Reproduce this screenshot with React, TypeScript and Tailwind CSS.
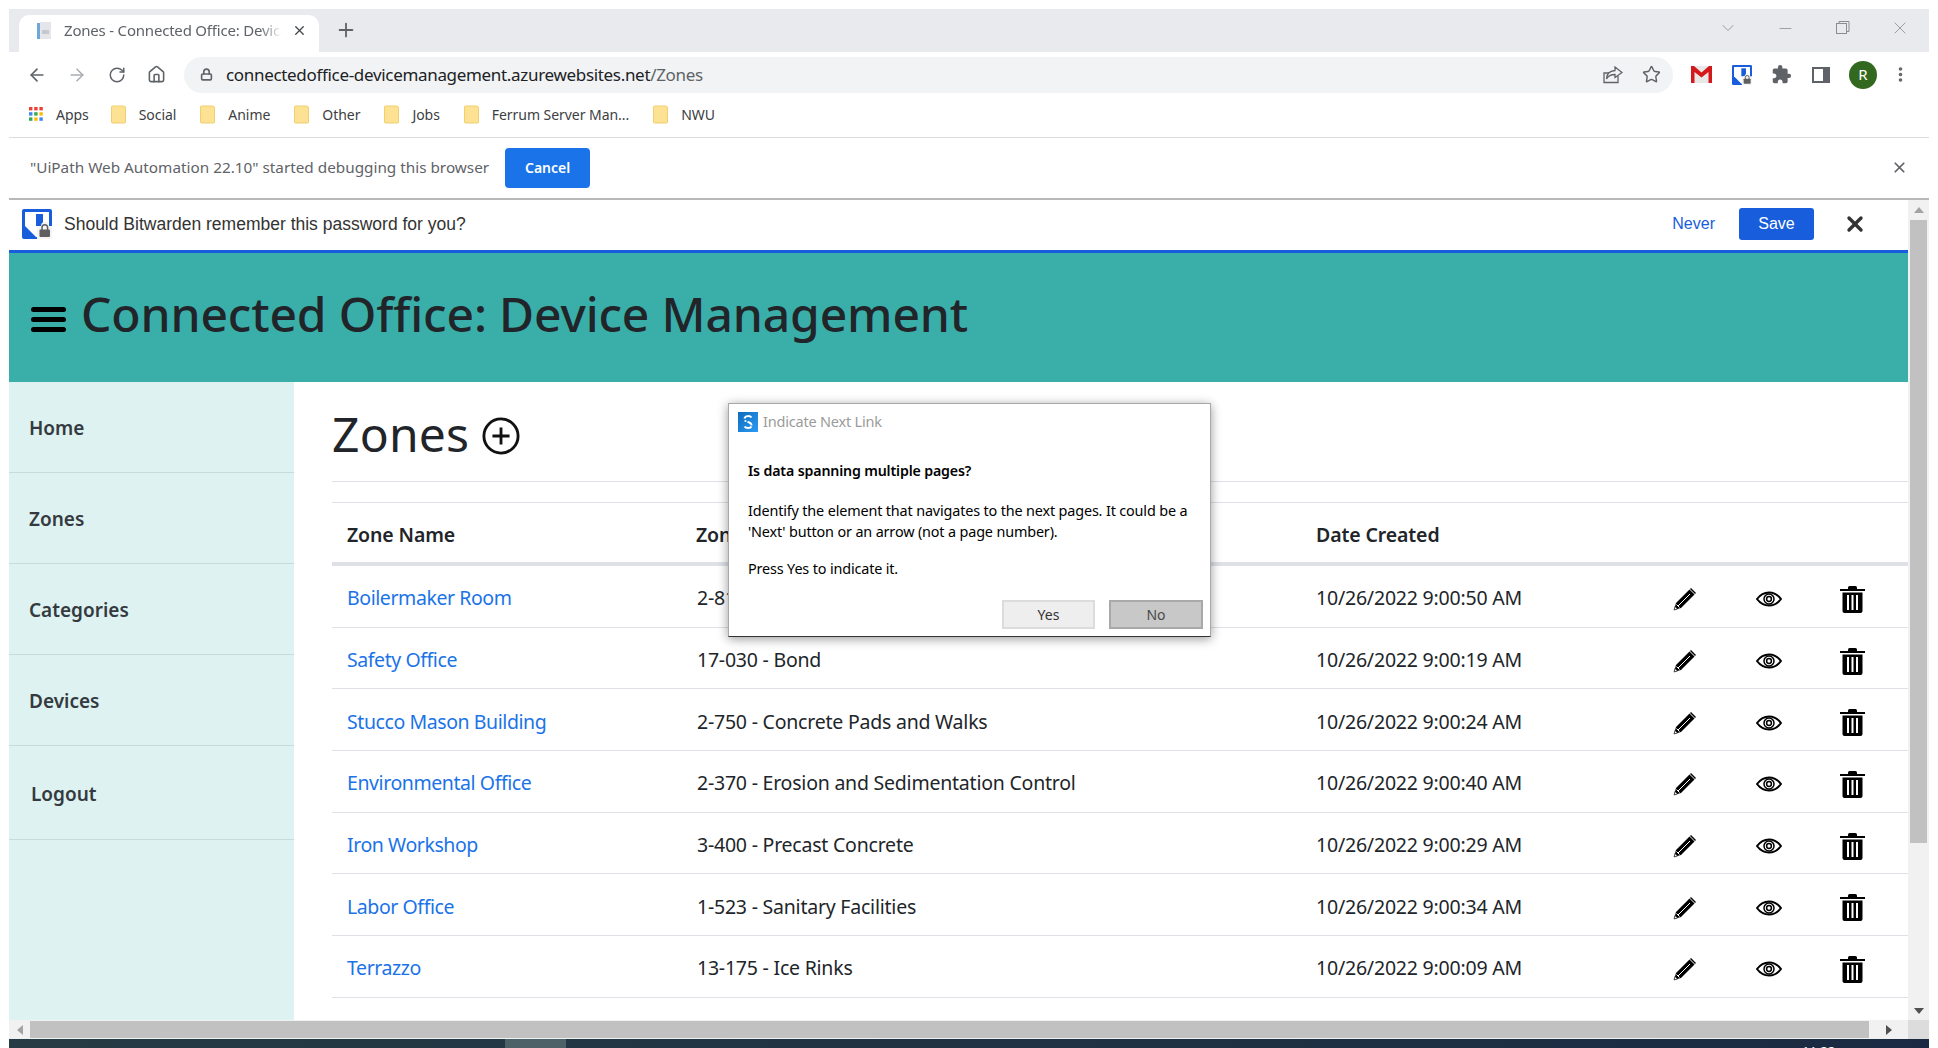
import { ArrowLeft, ArrowRight, RotateCw, Home, Lock, Star, Plus, X, ChevronDown, Minus, MoreVertical } from "lucide-react";
import { MdExtension } from "react-icons/md";

const zones = [
  { name: "Boilermaker Room", zone: "2-810 - Asphalt Paving", date: "10/26/2022 9:00:50 AM" },
  { name: "Safety Office", zone: "17-030 - Bond", date: "10/26/2022 9:00:19 AM" },
  { name: "Stucco Mason Building", zone: "2-750 - Concrete Pads and Walks", date: "10/26/2022 9:00:24 AM" },
  { name: "Environmental Office", zone: "2-370 - Erosion and Sedimentation Control", date: "10/26/2022 9:00:40 AM" },
  { name: "Iron Workshop", zone: "3-400 - Precast Concrete", date: "10/26/2022 9:00:29 AM" },
  { name: "Labor Office", zone: "1-523 - Sanitary Facilities", date: "10/26/2022 9:00:34 AM" },
  { name: "Terrazzo", zone: "13-175 - Ice Rinks", date: "10/26/2022 9:00:09 AM" },
];

const bookmarks = ["Social", "Anime", "Other", "Jobs", "Ferrum Server Man...", "NWU"];
const navItems = ["Home", "Zones", "Categories", "Devices"];

function FolderIcon() {
  return (
    <svg width="16" height="19" viewBox="0 0 16 19">
      <path d="M1.5 1h11a2 2 0 0 1 2 2v14a1 1 0 0 1-1 1h-12a1 1 0 0 1-1-1V2a1 1 0 0 1 1-1z" fill="#fde293" stroke="#f0cf70" />
    </svg>
  );
}

function AppsIcon() {
  const colors = ["#ea4335", "#ea4335", "#ea4335", "#4285f4", "#34a853", "#fbbc04", "#34a853", "#fbbc04", "#4285f4"];
  return (
    <svg width="16" height="16" viewBox="0 0 16 16">
      {colors.map((c, i) => (
        <rect key={i} x={1 + (i % 3) * 5.2} y={1 + Math.floor(i / 3) * 5.2} width="3.4" height="3.4" fill={c} />
      ))}
    </svg>
  );
}

function BitwardenIcon({ size }: { size: number }) {
  return (
    <svg width={size} height={size} viewBox="0 0 30 30">
      <rect x="0" y="0" width="30" height="30" rx="2" fill="#175ddc" />
      <path d="M3 3H27V28H14L3 17Z" fill="#fff" />
      <rect x="14" y="5" width="7" height="12" fill="#175ddc" />
      <path d="M15 30V20a3 3 0 0 1 3-3h1a4 4 0 0 1 8 0h3v13z" fill="#f4f4f4" />
      <rect x="17.500" y="20.500" width="10.500" height="7.500" rx="1" fill="#5f5f5f" />
      <path d="M20 21v-2.500a2.800 2.800 0 0 1 5.600 0V21" fill="none" stroke="#5f5f5f" strokeWidth="1.500" />
    </svg>
  );
}

function GmailIcon() {
  return (
    <svg width="21" height="17" viewBox="0 0 21 17">
      <rect width="21" height="17" fill="#e8e8e8" />
      <path d="M0 0h3l7.500 6.500L18 0h3v17h-3.500V6l-7 5.500L3.500 6v11H0z" fill="#d5181c" />
    </svg>
  );
}

function PencilIcon() {
  return (
    <svg width="24" height="24" viewBox="0 0 24 24">
      <path d="M1 23l2-7L16.500 2.500l5 5L8 21z" fill="#000" />
      <path d="M18 1l5 5-1 1-5-5z" fill="#000" />
      <path d="M5 19L17 7" stroke="#fff" strokeWidth="1" />
      <path d="M3.500 17.500l3 3" stroke="#fff" strokeWidth="1" />
      <path d="M1 23l1-3.500 2.500 2.500z" fill="#fff" stroke="#000" strokeWidth="0.6" />
    </svg>
  );
}

function EyeIcon() {
  return (
    <svg width="26" height="16" viewBox="0 0 26 16">
      <path d="M1 8c3-4 7.500-6.500 12-6.500S22 4 25 8c-3 4-7.500 6.500-12 6.500S4 12 1 8z" fill="none" stroke="#000" strokeWidth="2" />
      <circle cx="13" cy="8" r="5" fill="none" stroke="#000" strokeWidth="1.500" />
      <circle cx="13" cy="8" r="2.400" fill="none" stroke="#000" strokeWidth="1.500" />
    </svg>
  );
}

function TrashIcon() {
  return (
    <svg width="25" height="27" viewBox="0 0 25 27">
      <path d="M0 3h25v2H0z" fill="#000" />
      <path d="M8 3V1.500A1.500 1.500 0 0 1 9.500 0h6A1.500 1.500 0 0 1 17 1.500V3z" fill="#000" />
      <path d="M2.500 6.500h20V25a2 2 0 0 1-2 2h-16a2 2 0 0 1-2-2z" fill="#000" />
      <rect x="7" y="9" width="2" height="15" fill="#fff" />
      <rect x="11.500" y="9" width="2" height="15" fill="#fff" />
      <rect x="16" y="9" width="2" height="15" fill="#fff" />
    </svg>
  );
}

function DialogLogo() {
  return (
    <svg width="20" height="20" viewBox="0 0 20 20">
      <defs>
        <linearGradient id="dlg" x1="0" y1="0" x2="1" y2="1">
          <stop offset="0" stopColor="#0f6cbd" />
          <stop offset="1" stopColor="#2b9af3" />
        </linearGradient>
      </defs>
      <rect width="20" height="20" fill="url(#dlg)" />
      <path d="M13.500 5.500C12 3.500 7 3.500 6.500 6.500" fill="none" stroke="#fff" strokeWidth="2" />
      <circle cx="7.500" cy="9" r="1.100" fill="#fff" />
      <path d="M9.500 10c3 0.500 4 1.500 4 3.500" fill="none" stroke="#fff" strokeWidth="2" />
      <path d="M6.500 14.500c1.500 2 6 2 7 0" fill="none" stroke="#fff" strokeWidth="2" />
    </svg>
  );
}

export default function App() {
  return (
    <div className="relative flex h-[1048px] w-[1938px] flex-col overflow-hidden bg-white pt-[9px] pl-[9px] pr-[9px] font-['Noto_Sans',sans-serif] text-[#212529]">
      {/* tab strip */}
      <div className="flex h-[43px] shrink-0 items-end bg-[#e8eaed] pl-[10px]">
        <div className="flex h-[37px] w-[300px] items-center rounded-t-[10px] bg-white pb-[6px] pl-[16px] pr-[10px]">
          <svg width="20" height="20" viewBox="0 0 20 20" className="shrink-0">
            <rect x="2" y="2" width="3" height="16" fill="#6ea8d8" />
            <rect x="5" y="1" width="11" height="17" fill="#e6e6ea" />
            <rect x="7" y="9" width="7" height="4" fill="#c4c8d0" />
          </svg>
          <span className="ml-[9px] w-[218px] overflow-hidden whitespace-nowrap text-[15px] tracking-[-0.2px] text-[#5f6368] [mask-image:linear-gradient(to_right,black_90%,transparent)]">Zones - Connected Office: Device Management</span>
          <X size={15} strokeWidth={2.2} className="ml-[10px] shrink-0 text-[#45494d]" />
        </div>
        <Plus size={22} strokeWidth={2} className="mb-[11px] ml-[16px] text-[#5f6368]" />
        <div className="mb-[14px] ml-auto flex items-center text-[#8a8d91]">
          <ChevronDown size={20} strokeWidth={1} className="mr-[38px]" />
          <Minus size={19} strokeWidth={1} className="mr-[41px]" />
          <svg width="14" height="14" viewBox="0 0 14 14" className="mr-[40px]" fill="none" stroke="currentColor" strokeWidth="1">
            <rect x="0.500" y="2.500" width="10" height="10" />
            <path d="M3 2.500V0.500h10v10h-2" />
          </svg>
          <X size={20} strokeWidth={1} className="mr-[19px]" />
        </div>
      </div>

      {/* toolbar */}
      <div className="flex h-[47px] shrink-0 items-center pb-[2px] pl-[16px]">
        <ArrowLeft size={20} strokeWidth={2} className="ml-[2px] text-[#5f6368]" />
        <ArrowRight size={20} strokeWidth={1.8} className="ml-[20px] text-[#a9adb1]" />
        <RotateCw size={18} strokeWidth={2} className="ml-[21px] text-[#5f6368]" />
        <Home size={19} strokeWidth={2} className="ml-[21px] text-[#5f6368]" />
        <div className="ml-[18px] flex h-[36px] w-[1489px] items-center rounded-[18px] bg-[#f1f3f4] pl-[16px] pr-[12px]">
          <Lock size={13} strokeWidth={3} className="text-[#5f6368]" />
          <span className="ml-[13px] text-[17px] tracking-[-0.32px] text-[#202124]">connectedoffice-devicemanagement.azurewebsites.net<span className="text-[#5f6368]">/Zones</span></span>
          <svg width="20" height="18" viewBox="0 0 20 18" className="ml-auto" fill="none" stroke="#5f6368" strokeWidth="1.300">
            <path d="M15 10v6.500H1V7h5" />
            <path d="M12 1l7 5.500-7 5V8.500C8 8.500 5 10 3.500 13c0-5 3.500-8 8.500-8.500z" />
          </svg>
          <Star size={19} strokeWidth={1.8} className="ml-[19px] text-[#5f6368]" />
        </div>
        <div className="ml-[18px] flex items-center">
          <GmailIcon />
          <span className="ml-[20px] flex"><BitwardenIcon size={20} /></span>
          <MdExtension size={21} className="ml-[19px] text-[#5f6368]" />
          <svg width="18" height="16" viewBox="0 0 18 16" className="ml-[20px]">
            <rect width="18" height="16" fill="#5f6368" />
            <rect x="2" y="2" width="9" height="12" fill="#fff" />
          </svg>
          <div className="ml-[19px] flex h-[28px] w-[28px] items-center justify-center rounded-full bg-[#33691e] text-[15px] text-white">R</div>
          <MoreVertical size={19} strokeWidth={2.6} className="ml-[14px] text-[#5f6368]" />
        </div>
      </div>

      {/* bookmarks */}
      <div className="flex h-[39px] shrink-0 items-center border-b border-[#dadce0] pb-[8px] pl-[19px] text-[14px] tracking-[-0.05px] text-[#3c4043]">
        <AppsIcon />
        <span className="ml-[12px] mr-[22px]">Apps</span>
        {bookmarks.map((b) => (
          <span key={b} className="mr-[24px] flex items-center">
            <FolderIcon />
            <span className="ml-[12px]">{b}</span>
          </span>
        ))}
      </div>

      {/* debugging bar */}
      <div className="flex h-[62px] shrink-0 items-center border-b-2 border-[#b8b8b8] pb-[1px] pl-[21px] pr-[21px] text-[15.300px] text-[#5f6368]">
        <span>"UiPath Web Automation 22.10" started debugging this browser</span>
        <span className="ml-[16px] flex h-[40px] w-[85px] items-center justify-center rounded-[4px] bg-[#1a73e8] text-[14px] font-semibold text-white">Cancel</span>
        <X size={17} strokeWidth={2.4} className="ml-auto text-[#5f6368]" />
      </div>

      {/* page viewport */}
      <div className="flex min-h-0 flex-1 flex-col">
        <div className="flex min-h-0 flex-1">
          <div className="flex min-w-0 flex-1 flex-col">
            <div className="flex h-[50px] shrink-0 items-center pb-[2px] pl-[13px] pr-[41px] font-['Liberation_Sans',sans-serif]">
              <BitwardenIcon size={30} />
              <span className="ml-[12px] text-[17.500px] text-[#333]">Should Bitwarden remember this password for you?</span>
              <span className="ml-auto text-[16px] text-[#175ddc]">Never</span>
              <span className="ml-[24px] flex h-[32px] w-[75px] items-center justify-center rounded-[3px] bg-[#175ddc] text-[16px] text-white">Save</span>
              <X size={24} strokeWidth={3.4} className="ml-[29px] text-[#333]" />
            </div>
            <div className="flex h-[132px] shrink-0 items-center border-t-[3px] border-[#175ddc] bg-[#3aafa9] pb-[8px] pl-[22px]">
              <div className="mt-[12px] flex w-[35px] flex-col gap-[5px]">
                <span className="h-[5px] rounded-full bg-black" />
                <span className="h-[5px] rounded-full bg-black" />
                <span className="h-[5px] rounded-full bg-black" />
              </div>
              <h1 className="ml-[15px] text-[48px] font-medium tracking-[-0.15px] text-[#212529]">Connected Office: Device Management</h1>
            </div>
            <div className="flex min-h-0 flex-1">
              <nav className="w-[285px] shrink-0 bg-[#def2f1] text-[19px] font-semibold text-[#343a40]">
                {navItems.map((n) => (
                  <div key={n} className="flex h-[91px] items-center border-b border-[#c5dcdb] pl-[20px] pt-[2px]">{n}</div>
                ))}
                <div className="flex h-[94px] items-center border-b border-[#c5dcdb] pl-[22px] pt-[3px]">Logout</div>
              </nav>
              <main className="min-w-0 flex-1 pl-[38px]">
                <div className="flex h-[100px] items-center border-b border-[#dee2e6] pt-[4px]">
                  <h2 className="text-[48px] tracking-[0.2px]">Zones</h2>
                  <svg width="38" height="38" viewBox="0 0 40 40" className="ml-[13px] mt-[5px]" fill="none" stroke="#111" strokeWidth="3">
                    <circle cx="20" cy="20" r="18" />
                    <path d="M20 11v18M11 20h18" />
                  </svg>
                </div>
                <div className="mt-[20px] flex h-[64px] items-center border-y border-b-[4px] border-[#dee2e6] pt-[5px] text-[19.500px] font-semibold tracking-[-0.12px]">
                  <div className="w-[349px] pl-[15px]">Zone Name</div>
                  <div className="w-[620px] pl-[15px]">Zone Category</div>
                  <div className="pl-[15px]">Date Created</div>
                </div>
                {zones.map((z) => (
                  <div key={z.name} className="flex h-[61.700px] items-center border-b border-[#dee2e6] pt-[3px] text-[19.500px]">
                    <div className="w-[349px] pl-[15px] tracking-[-0.42px] text-[#1a73e8]">{z.name}</div>
                    <div className="w-[620px] pl-[16px] tracking-[-0.22px]">{z.zone}</div>
                    <div className="w-[344px] pl-[15px] tracking-[-0.2px]">{z.date}</div>
                    <div className="flex w-[83px] justify-center pr-[3px] pt-[3px]"><PencilIcon /></div>
                    <div className="flex w-[83px] justify-center pr-[1px] pt-[3px]"><EyeIcon /></div>
                    <div className="flex w-[83px] justify-center pt-[3px]"><TrashIcon /></div>
                  </div>
                ))}
              </main>
            </div>
          </div>

          {/* vertical scrollbar */}
          <div className="flex w-[21px] shrink-0 flex-col items-center bg-[#f1f1f1]">
            <div className="flex h-[20px] items-center justify-center">
              <div className="h-0 w-0 border-x-[5px] border-b-[6px] border-x-transparent border-b-[#a3a3a3]" />
            </div>
            <div className="h-[623px] w-[17px] bg-[#c1c1c1]" />
            <div className="mt-auto flex h-[18px] items-center justify-center">
              <div className="h-0 w-0 border-x-[5px] border-t-[6px] border-x-transparent border-t-[#505050]" />
            </div>
          </div>
        </div>

        {/* horizontal scrollbar */}
        <div className="flex h-[19px] shrink-0 items-center bg-[#f1f1f1]">
          <div className="flex w-[21px] justify-center">
            <div className="h-0 w-0 border-y-[5px] border-r-[6px] border-y-transparent border-r-[#a3a3a3]" />
          </div>
          <div className="h-[17px] w-[1839px] bg-[#c1c1c1]" />
          <div className="flex flex-1 justify-center">
            <div className="h-0 w-0 border-y-[5px] border-l-[6px] border-y-transparent border-l-[#505050]" />
          </div>
          <div className="h-full w-[21px] bg-[#dcdcdc]" />
        </div>

        {/* desktop taskbar peeking under the window */}
        <div className="flex h-[9px] shrink-0 overflow-hidden bg-gradient-to-r from-[#263b44] to-[#1b2a42]">
          <div className="ml-[496px] h-full w-[61px] bg-[#4d6268]" />
          <span className="ml-[1236px] mt-[6px] text-[13px] leading-none text-white">11:22</span>
        </div>
      </div>

      {/* UiPath dialog */}
      <div className="absolute left-[728px] top-[403px] flex h-[234px] w-[483px] flex-col border border-[#a8a8a8] border-b-[#333] bg-white shadow-[0_2px_10px_rgba(0,0,0,0.4)] font-['Noto_Sans',sans-serif]">
        <div className="ml-[9px] mt-[7px] flex items-center">
          <DialogLogo />
          <span className="ml-[5px] text-[14.500px] tracking-[-0.2px] text-[#9b9b9b]">Indicate Next Link</span>
        </div>
        <p className="ml-[19px] mt-[27px] text-[14.200px] font-semibold tracking-[-0.15px] text-black">Is data spanning multiple pages?</p>
        <p className="ml-[19px] mt-[19px] w-[450px] text-[14.400px] leading-[21px] tracking-[-0.15px] text-black">Identify the element that navigates to the next pages. It could be a 'Next' button or an arrow (not a page number).</p>
        <p className="ml-[19px] mt-[16px] text-[14.400px] tracking-[-0.15px] text-black">Press Yes to indicate it.</p>
        <div className="mr-[7px] mt-auto mb-[7px] flex justify-end gap-[14px]">
          <span className="flex h-[29px] w-[93px] items-center justify-center border-2 border-[#dcdcdc] bg-[#eeeeee] text-[14px] text-[#333]">Yes</span>
          <span className="flex h-[29px] w-[94px] items-center justify-center border-2 border-[#a9a9a9] bg-[#c8c8c8] text-[14px] text-[#4a4a4a]">No</span>
        </div>
      </div>
    </div>
  );
}
